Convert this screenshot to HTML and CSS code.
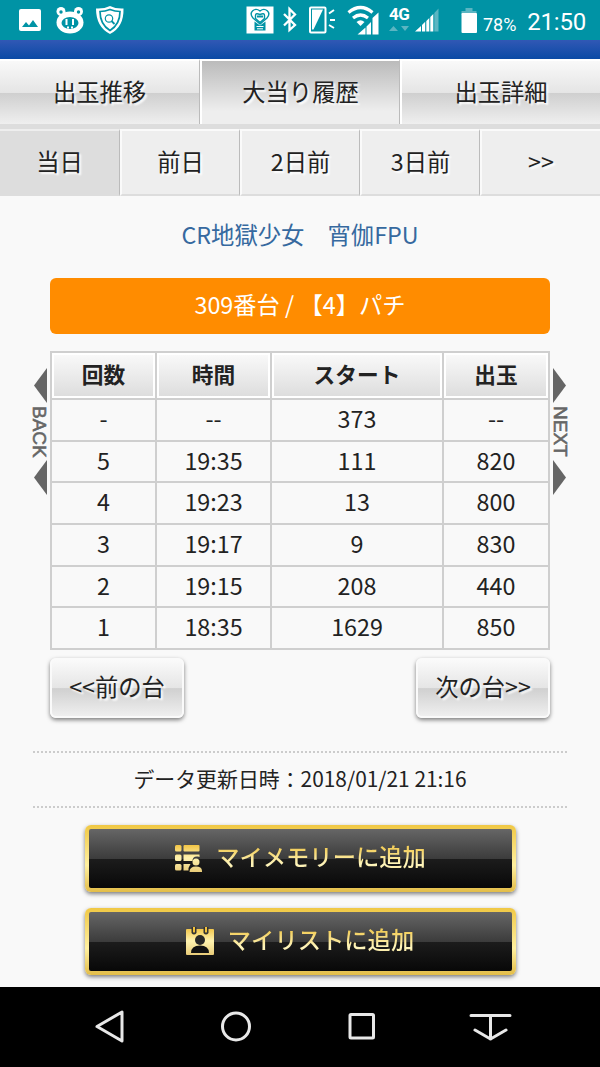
FILE: index.html
```
<!DOCTYPE html>
<html lang="ja">
<head>
    <meta charset="UTF-8">
    <title>大当り履歴</title>
    <link rel="stylesheet" href="styles.css">
</head>
<body>
    <div class="status-bar">
        <svg class="status-left" width="106" height="40" viewBox="18 0 106 40">
            <rect x="19" y="9" width="22" height="22" rx="2" fill="#fff"/>
            <path d="M22 27l4-5 3 3.500 4-5.500 5 7z" fill="#0093a5"/>
            <circle cx="61" cy="11.500" r="4.500" fill="#fff"/>
            <circle cx="78.500" cy="11.500" r="4.500" fill="#fff"/>
            <ellipse cx="70" cy="22.500" rx="13.500" ry="11" fill="#fff"/>
            <circle cx="61" cy="12" r="1.700" fill="#0093a5"/>
            <circle cx="78.500" cy="12" r="1.700" fill="#0093a5"/>
            <ellipse cx="70" cy="23" rx="8.500" ry="6" fill="#0093a5"/>
            <path d="M66.500 19v6M73 19v6M67 27.500h2M71 27.500h2" stroke="#fff" stroke-width="2"/>
            <path d="M96 8.500Q104 9 110 6q6 3 13.500 2.500Q124 27 110 34 96 27 96 8.500z" fill="#fff"/>
            <path d="M100 11.500q5 0 10-2 5 2 10 2 0 13-10 19-10-6-10-19z" fill="none" stroke="#0093a5" stroke-width="1.700"/>
            <circle cx="109" cy="18.500" r="3.700" fill="none" stroke="#0093a5" stroke-width="1.200"/>
            <path d="M111.500 21l3 3" stroke="#0093a5" stroke-width="1.800"/>
        </svg>
        <svg width="92" height="40" viewBox="246 0 92 40">
            <rect x="246.500" y="6.500" width="27" height="27" fill="#fff"/>
            <path d="M260 24l-7-6c-5-6 2-11 7-7 5-4 12 1 7 7z" fill="none" stroke="#0093a5" stroke-width="1.400"/>
            <path d="M255.500 15.500q0-3 4.500-1 4.500-2 4.500 1v3l-4.500 4-4.500-4z" fill="none" stroke="#0093a5" stroke-width="1.400"/>
            <path d="M257 15.500h6v2h-6zM254.500 21.500v9h11v-9l-5.500 4z" fill="#0093a5"/>
            <path d="M256.500 26.500h7M257 28.800h6" stroke="#fff" stroke-width="1"/>
            <path d="M284 14l11 11-5.500 5V9l5.500 5.500-11 11" fill="none" stroke="#fff" stroke-width="2.300"/>
            <rect x="310" y="7.500" width="15.500" height="25" rx="1" fill="none" stroke="#fff" stroke-width="2"/>
            <path d="M312 9.500h11l-9.500 20h-1.500z" fill="#fff"/>
            <path d="M329 13.500l5-3.500M330 20h5M329 25l5 3" stroke="#fff" stroke-width="2"/>
        </svg>
        <svg class="wifi" width="34" height="40" viewBox="347 0 34 40">
            <path d="M348.500 12.500q12-10 24 0M353 18q7.500-6 15 0" fill="none" stroke="#fff" stroke-width="3.200"/>
            <path d="M356.500 22q4-3.500 8 0l-4 4z" fill="#fff"/>
            <path d="M357.500 34.500l8-7v7zM366.500 34.500v-8l4.500-4.500v12.500zM372.500 34.500V18l6-5.500v22z" fill="#fff"/>
        </svg>
        <div class="network">
            <span>4G</span>
            <svg width="22" height="7" viewBox="0 0 22 7"><path d="M0 6l4.500-5L9 6zM12 1h8l-4 5z" fill="#5bb5c2"/></svg>
        </div>
        <svg class="signal" width="25" height="40" viewBox="415 0 25 40">
            <path d="M415 31.500l6-5.500v5.500zM422 31.500V25l3.200-3.200v9.700zM426.300 31.500V21l3-3v13.500zM430.300 31.500V17l3-3v17.500z" fill="#fff"/>
            <path d="M434.300 31.500V13l4.200-4.500v23z" fill="#5bb5c2"/>
        </svg>
        <svg class="battery" width="17" height="40" viewBox="461 0 17 40">
            <path d="M465.500 8h7v3h4v4h-15v-4h4z" fill="#5bb5c2"/>
            <rect x="461.500" y="13" width="15.500" height="20" rx="1" fill="#fff"/>
        </svg>
        <span class="percent">78%</span>
        <span class="clock">21:50</span>
    </div>
    <div class="site-header"></div>

    <nav class="tabs">
        <a class="tab">出玉推移</a>
        <a class="tab tab-active">大当り履歴</a>
        <a class="tab">出玉詳細</a>
    </nav>
    <nav class="days">
        <a class="day day-active">当日</a>
        <a class="day">前日</a>
        <a class="day">2日前</a>
        <a class="day">3日前</a>
        <a class="day">&gt;&gt;</a>
    </nav>

    <main class="content">
        <h1 class="machine-name">CR地獄少女　宵伽FPU</h1>
        <div class="machine-number">309番台 / 【4】パチ</div>

        <div class="history">
            <div class="side side-back">
                <svg width="13" height="35" viewBox="0 0 13 35"><path d="M13 0v35L0 17.500z" fill="#666"/></svg>
                <span>BACK</span>
                <svg width="13" height="35" viewBox="0 0 13 35"><path d="M13 0v35L0 17.500z" fill="#666"/></svg>
            </div>
            <table class="history-table">
                <colgroup>
                    <col class="col-count">
                    <col class="col-time">
                    <col class="col-start">
                    <col class="col-balls">
                </colgroup>
                <thead>
                    <tr><th>回数</th><th>時間</th><th>スタート</th><th>出玉</th></tr>
                </thead>
                <tbody>
                    <tr><td>-</td><td>--</td><td>373</td><td>--</td></tr>
                    <tr><td>5</td><td>19:35</td><td>111</td><td>820</td></tr>
                    <tr><td>4</td><td>19:23</td><td>13</td><td>800</td></tr>
                    <tr><td>3</td><td>19:17</td><td>9</td><td>830</td></tr>
                    <tr><td>2</td><td>19:15</td><td>208</td><td>440</td></tr>
                    <tr><td>1</td><td>18:35</td><td>1629</td><td>850</td></tr>
                </tbody>
            </table>
            <div class="side side-next">
                <svg width="13" height="35" viewBox="0 0 13 35"><path d="M0 0v35l13-17.500z" fill="#666"/></svg>
                <span>NEXT</span>
                <svg width="13" height="35" viewBox="0 0 13 35"><path d="M0 0v35l13-17.500z" fill="#666"/></svg>
            </div>
        </div>

        <div class="pager">
            <a class="pager-button">&lt;&lt;前の台</a>
            <a class="pager-button">次の台&gt;&gt;</a>
        </div>

        <p class="updated">データ更新日時：2018/01/21 21:16</p>

        <a class="gold-button">
            <svg width="28" height="28" viewBox="0 0 28 28">
                <defs>
                    <linearGradient id="gold" x1="0" y1="0" x2="0" y2="28" gradientUnits="userSpaceOnUse">
                        <stop offset="0" stop-color="#f0c03c"/>
                        <stop offset=".5" stop-color="#fff3b0"/>
                        <stop offset="1" stop-color="#e8cb78"/>
                    </linearGradient>
                </defs>
                <g fill="url(#gold)">
                    <rect x="1" y="1" width="6.500" height="6.500" rx="1.500"/>
                    <rect x="9.500" y="1" width="16" height="6.500" rx="1"/>
                    <rect x="1" y="10.500" width="6.500" height="6.500" rx="1.500"/>
                    <path d="M9.500 10.500h16v2.500c-5-1.500-7 1-7 4h-9z"/>
                    <rect x="1" y="20" width="6.500" height="6.500" rx="1.500"/>
                    <path d="M9.500 20h7l-2 4v2.500h-5z"/>
                    <circle cx="22" cy="18" r="3.500"/>
                    <path d="M15.500 28q0-5.500 6.500-5.500t6 5.500z"/>
                </g>
            </svg>
            <span>マイメモリーに追加</span>
        </a>
        <a class="gold-button">
            <svg width="28" height="28" viewBox="0 0 28 28">
                <rect x="0" y="2" width="28" height="26" rx="1" fill="url(#gold)"/>
                <path d="M5.500 0v6q2.500 3 5 0V0M17.500 0v6q2.500 3 5 0V0" fill="#333"/>
                <path d="M7 0v5q1 1.500 2 0V0M19 0v5q1 1.500 2 0V0" fill="#f0c03c"/>
                <circle cx="14" cy="13" r="5" fill="#272727"/>
                <path d="M5 26q0-7.500 9-7.500t9 7.500z" fill="#111"/>
            </svg>
            <span>マイリストに追加</span>
        </a>
    </main>

    <div class="nav-bar">
        <svg width="30" height="36" viewBox="0 0 30 36"><path d="M27 3v29L2 17.500z"/></svg>
        <svg width="32" height="36" viewBox="-1 0 32 36"><circle cx="16" cy="17.500" r="13.500"/></svg>
        <svg width="30" height="36" viewBox="-3 0 30 36"><rect x="2" y="5.500" width="23.500" height="23.500" rx="1"/></svg>
        <svg width="44" height="36" viewBox="0 0 44 36"><path d="M2 6.500h39M21.500 7v23M6 21l15.500 9L37 21"/></svg>
    </div>
</body>
</html>
```
FILE: styles.css
```
* {
    box-sizing: border-box;
}

body {
    margin: 0;
    height: 1067px;
    display: flex;
    flex-direction: column;
    overflow: hidden;
    background: #f9f9f9;
    color: #222;
    font-family: "Noto Sans CJK JP", sans-serif;
    font-size: 23.3px;
}

svg {
    display: block;
    flex: none;
}

.status-bar {
    display: flex;
    flex: none;
    height: 40px;
    padding: 0 14px 0 18px;
    background: #0093a5;
    color: #fff;
    font-family: Roboto, sans-serif;
    line-height: 1;
}

.status-left {
    margin-right: 122px;
}

.wifi {
    margin-left: 9px;
}

.network {
    width: 22px;
    margin: 6px 4px 0 8px;
    font-size: 17px;
    font-weight: bold;
}

.network span {
    display: block;
    height: 19px;
    letter-spacing: -0.5px;
}

.battery {
    margin-left: 21px;
}

.percent {
    width: 36px;
    margin: 16px 0 0 5px;
    font-size: 18px;
}

.clock {
    margin: 10px 0 0 auto;
    font-size: 24px;
    letter-spacing: -0.2px;
}

.site-header {
    flex: none;
    height: 19px;
    background: linear-gradient(#3158b5, #0a4aa5);
}

.tabs,
.days {
    display: flex;
    flex: none;
    text-shadow: 2px 2px 2px #fff;
}

.tab {
    width: 200px;
    height: 65px;
    line-height: 61px;
    text-align: center;
    border-top: 2px solid #fff;
    border-right: 1px solid #bbb;
    border-left: 2px solid #fff;
    background: linear-gradient(#f9f9f9, #e5e5e5 50%, #cfcfcf 51%, #efefef);
}

.tab:first-child,
.day:first-child {
    border-left: 0;
}

.tab:last-child,
.day:last-child {
    border-right: 0;
}

.tab-active {
    background: linear-gradient(#bbb, #eee 80%);
}

.days {
    border-top: 5px solid #ddd;
}

.day {
    width: 120px;
    height: 67px;
    line-height: 61px;
    text-align: center;
    border-top: 2px solid #fafafa;
    border-right: 1px solid #bbb;
    border-bottom: 2px solid #ddd;
    border-left: 2px solid #fafafa;
    background: #eee;
}

.day-active {
    border-top-color: #eee;
    background: #ddd;
}

.content {
    flex: 1;
    min-height: 0;
    display: flex;
    flex-direction: column;
    align-items: center;
}

.content > * {
    flex: none;
}

.machine-name {
    margin: 21px 0 27px;
    font-size: 23.3px;
    font-weight: normal;
    line-height: 34px;
    color: #36699f;
}

.machine-number {
    width: 500px;
    height: 56px;
    margin-bottom: 17px;
    border-radius: 6px;
    background: #ff8c00;
    color: #fff;
    line-height: 53px;
    text-align: center;
}

.history {
    display: flex;
    justify-content: center;
    width: 100%;
}

.side {
    display: flex;
    flex-direction: column;
    width: 17px;
    margin-top: 17px;
}

.side-back {
    align-items: flex-end;
    margin-right: 3px;
}

.side-next {
    margin-left: 3px;
}

.side span {
    height: 57px;
    width: 15px;
    color: #666;
    font-family: "Liberation Sans", sans-serif;
    font-size: 19px;
    line-height: 15px;
    text-align: center;
    writing-mode: vertical-rl;
    -webkit-text-stroke: 0.6px #666;
}

.history-table {
    width: 500px;
    table-layout: fixed;
    border-collapse: collapse;
    line-height: 30px;
    text-align: center;
}

.col-count {
    width: 105px;
}

.col-time {
    width: 115px;
}

.col-start {
    width: 172px;
}

.history-table th,
.history-table td {
    padding: 0;
    border: 2px solid #cfcfcf;
}

.history-table th {
    height: 47px;
    padding-bottom: 4px;
    font-size: 21.7px;
    box-shadow: inset 0 0 0 2px #fff;
    background: linear-gradient(#fafafa, #dcdcdc);
}

.history-table td {
    height: 42px;
    padding-bottom: 4px;
}

.history-table tr:nth-child(3n+2) td {
    height: 41px;
}

.pager {
    display: flex;
    justify-content: space-between;
    width: 500px;
    margin-top: 8px;
}

.pager-button {
    width: 134px;
    height: 60px;
    border: 2px solid #fafafa;
    border-radius: 6px;
    background: linear-gradient(#fafafa, #e5e5e5 50%, #d0d0d0 51%, #efefef);
    box-shadow: 0 2px 4px rgba(0, 0, 0, 0.5);
    line-height: 53px;
    text-align: center;
    text-shadow: 2px 2px 2px #fff;
}

.updated {
    width: 534px;
    height: 57px;
    margin: 33px 0 17px;
    border-top: 2px dotted #ccc;
    border-bottom: 2px dotted #ccc;
    font-size: 20.9px;
    line-height: 51px;
    text-align: center;
}

.gold-button {
    display: flex;
    justify-content: center;
    align-items: center;
    gap: 14px;
    width: 431px;
    height: 67px;
    margin-bottom: 16px;
    border: 4px solid transparent;
    border-radius: 6px;
    background: linear-gradient(#666, #3c3c3c 50%, #1c1c1c 51%, #080808) padding-box,
        linear-gradient(#f0c844, #fff0a0 60%, #e3bd48) border-box;
    box-shadow: 0 2px 4px rgba(0, 0, 0, 0.5);
    font-weight: 500;
}

.gold-button svg {
    margin-bottom: 2px;
}

.gold-button span {
    padding-bottom: 5px;
    background: linear-gradient(#f3cf5d 25%, #fff6bd 65%, #ebcf77);
    background-clip: text;
    -webkit-background-clip: text;
    color: transparent;
}

.nav-bar {
    display: flex;
    flex: none;
    height: 80px;
    padding: 22px 87px 0 95px;
    justify-content: space-between;
    background: #000;
}

.nav-bar svg {
    fill: none;
    stroke: #e8e8e8;
    stroke-width: 3;
    stroke-linejoin: round;
    stroke-linecap: round;
}
```
